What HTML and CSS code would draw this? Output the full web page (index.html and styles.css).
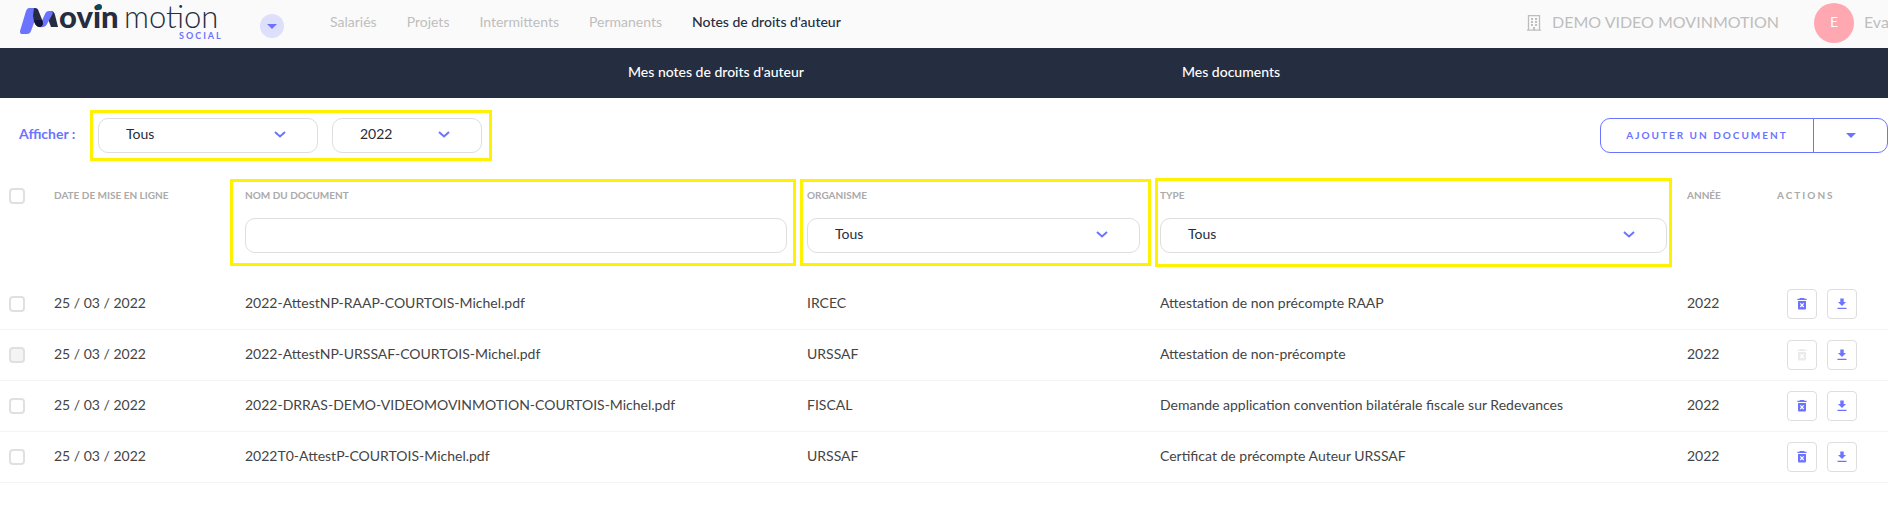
FILE: index.html
```html
<!DOCTYPE html>
<html lang="fr">
<head>
    <meta charset="UTF-8">
    <meta name="viewport" content="width=device-width, initial-scale=1.0">
    <title>Movinmotion Social - Notes de droits d'auteur</title>
    <link rel="stylesheet" href="styles.css">
</head>
<body>
    <!-- Shared icons -->
    <svg class="sprite" aria-hidden="true">
        <symbol id="chevron" viewBox="0 0 12 7">
            <path d="M1 0.9 L6 5.5 L11 0.9" fill="none" stroke="currentColor" stroke-width="2"/>
        </symbol>
        <symbol id="caret" viewBox="0 0 10 5">
            <path d="M0 0 H10 L5 5 Z" fill="currentColor"/>
        </symbol>
        <symbol id="trash" viewBox="0 0 10 12">
            <path d="M3 0 H7 L7.6 0.7 H9.6 V2 H0.4 V0.7 H2.4 Z" fill="currentColor"/>
            <path d="M1 3 H9 V10.6 Q9 11.6 8 11.6 H2 Q1 11.6 1 10.6 Z" fill="currentColor"/>
            <path d="M3.3 5.4 L6.7 9 M6.7 5.4 L3.3 9" fill="none" stroke="#fff" stroke-width="1.2"/>
        </symbol>
        <symbol id="download" viewBox="0 0 10 12">
            <path d="M3.3 0.5 H6.7 V4 H9 L5 8 L1 4 H3.3 Z M0.5 9.7 H9.5 V11.1 H0.5 Z" fill="currentColor"/>
        </symbol>
    </svg>

    <header class="topbar">
        <a class="logo" href="#" aria-label="Movinmotion Social">
            <svg width="204" height="44" viewBox="0 0 204 44">
                <path d="M12 8 H18 Q22 8 21 12 L14 31 Q13 34 10 34 H4 Q3 34 3 31 L9 11 Q10 8 12 8 Z" fill="#6c73ff"/>
                <path d="M34 11 Q37 11 38 15 L41 27 H34 L31 19 Z" fill="#252d40"/>
                <path d="M22 27 L28 14 Q29 11 32 11 H34 Q37 12 35 15 L30 24 Q28 28 22 27 Z" fill="#6c73ff"/>
                <path d="M17 8 Q21 8 22 12 L26 22 Q26 27 22 27 Q18 26 17 21 L16 16 Z" fill="#252d40"/>
                <path d="M17 20 L25 20 L26 24 Q25 27 22 27 Q18 26 17 20 Z" fill="#12123c"/>
                <text class="logo-bold" x="42" y="28">ovin</text>
                <text class="logo-light" x="107" y="28">motion</text>
                <circle cx="82" cy="7" r="3" fill="#0c4a63"/>
                <text class="logo-social" x="162" y="39">SOCIAL</text>
            </svg>
        </a>
        <button class="switcher" aria-label="Changer d'espace">
            <svg width="10" height="5"><use href="#caret"/></svg>
        </button>
        <nav class="main-nav">
            <a href="#">Salariés</a>
            <a href="#">Projets</a>
            <a href="#">Intermittents</a>
            <a href="#">Permanents</a>
            <a href="#" class="active">Notes de droits d'auteur</a>
        </nav>
        <div class="account">
            <svg width="14" height="16" viewBox="0 0 14 16">
                <path d="M1.5 15 V0.7 H12.5 V15 M0 15.2 H14" fill="none" stroke="#bebebe" stroke-width="1.3"/>
                <path d="M4 3 H6 V5 H4 Z M8 3 H10 V5 H8 Z M4 6 H6 V8 H4 Z M8 6 H10 V8 H8 Z M4 9 H6 V11 H4 Z M8 9 H10 V11 H8 Z M6 12 H8 V15 H6 Z" fill="#bebebe"/>
            </svg>
            <span class="company">DEMO VIDEO MOVINMOTION</span>
            <span class="avatar">E</span>
            <span class="user">Eva</span>
        </div>
    </header>

    <nav class="sub-nav">
        <a href="#">Mes notes de droits d'auteur</a>
        <a href="#">Mes documents</a>
    </nav>

    <main>
        <div class="toolbar">
            <label class="toolbar-label" for="show">Afficher :</label>
            <div class="filters">
                <div class="select wide">
                    <select id="show"><option>Tous</option></select>
                    <svg width="12" height="7"><use href="#chevron"/></svg>
                </div>
                <div class="select narrow">
                    <select aria-label="Année"><option>2022</option></select>
                    <svg width="12" height="7"><use href="#chevron"/></svg>
                </div>
            </div>
            <div class="add">
                <button class="add-main">AJOUTER UN DOCUMENT</button>
                <button class="add-more" aria-label="Plus d'options"><svg width="10" height="5"><use href="#caret"/></svg></button>
            </div>
        </div>

        <table class="documents">
            <colgroup>
                <col class="col-check">
                <col class="col-date">
                <col class="col-name">
                <col class="col-org">
                <col class="col-type">
                <col class="col-year">
                <col class="col-actions">
            </colgroup>
            <thead>
                <tr>
                    <th class="check"><input type="checkbox" aria-label="Tout sélectionner"></th>
                    <th>DATE DE MISE EN LIGNE</th>
                    <th class="marked marked-name">
                        <label for="name">NOM DU DOCUMENT</label>
                        <input type="text" id="name">
                    </th>
                    <th class="marked marked-org">
                        <label for="org">ORGANISME</label>
                        <div class="select">
                            <select id="org"><option>Tous</option></select>
                            <svg width="12" height="7"><use href="#chevron"/></svg>
                        </div>
                    </th>
                    <th class="marked marked-type">
                        <label for="type">TYPE</label>
                        <div class="select">
                            <select id="type"><option>Tous</option></select>
                            <svg width="12" height="7"><use href="#chevron"/></svg>
                        </div>
                    </th>
                    <th>ANNÉE</th>
                    <th class="actions-title">ACTIONS</th>
                </tr>
            </thead>
            <tbody>
                <tr>
                    <td class="check"><input type="checkbox" aria-label="Sélectionner"></td>
                    <td>25 / 03 / 2022</td>
                    <td>2022-AttestNP-RAAP-COURTOIS-Michel.pdf</td>
                    <td>IRCEC</td>
                    <td>Attestation de non précompte RAAP</td>
                    <td>2022</td>
                    <td class="actions-cell">
                        <div class="actions">
                            <button aria-label="Supprimer"><svg width="10" height="12"><use href="#trash"/></svg></button>
                            <button aria-label="Télécharger"><svg width="10" height="12"><use href="#download"/></svg></button>
                        </div>
                    </td>
                </tr>
                <tr>
                    <td class="check"><input type="checkbox" aria-label="Sélectionner" disabled></td>
                    <td>25 / 03 / 2022</td>
                    <td>2022-AttestNP-URSSAF-COURTOIS-Michel.pdf</td>
                    <td>URSSAF</td>
                    <td>Attestation de non-précompte</td>
                    <td>2022</td>
                    <td class="actions-cell">
                        <div class="actions">
                            <button aria-label="Supprimer" disabled><svg width="10" height="12"><use href="#trash"/></svg></button>
                            <button aria-label="Télécharger"><svg width="10" height="12"><use href="#download"/></svg></button>
                        </div>
                    </td>
                </tr>
                <tr>
                    <td class="check"><input type="checkbox" aria-label="Sélectionner"></td>
                    <td>25 / 03 / 2022</td>
                    <td>2022-DRRAS-DEMO-VIDEOMOVINMOTION-COURTOIS-Michel.pdf</td>
                    <td>FISCAL</td>
                    <td>Demande application convention bilatérale fiscale sur Redevances</td>
                    <td>2022</td>
                    <td class="actions-cell">
                        <div class="actions">
                            <button aria-label="Supprimer"><svg width="10" height="12"><use href="#trash"/></svg></button>
                            <button aria-label="Télécharger"><svg width="10" height="12"><use href="#download"/></svg></button>
                        </div>
                    </td>
                </tr>
                <tr>
                    <td class="check"><input type="checkbox" aria-label="Sélectionner"></td>
                    <td>25 / 03 / 2022</td>
                    <td>2022T0-AttestP-COURTOIS-Michel.pdf</td>
                    <td>URSSAF</td>
                    <td>Certificat de précompte Auteur URSSAF</td>
                    <td>2022</td>
                    <td class="actions-cell">
                        <div class="actions">
                            <button aria-label="Supprimer"><svg width="10" height="12"><use href="#trash"/></svg></button>
                            <button aria-label="Télécharger"><svg width="10" height="12"><use href="#download"/></svg></button>
                        </div>
                    </td>
                </tr>
            </tbody>
        </table>
    </main>
</body>
</html>
```
FILE: styles.css
```css
* {
    box-sizing: border-box;
}

body {
    margin: 0;
    background-color: #fff;
    color: #444;
    font-family: Lato, sans-serif;
    font-size: 14px;
    line-height: 20px;
}

a {
    color: inherit;
    text-decoration: none;
}

button,
input,
select {
    margin: 0;
    font: inherit;
    color: inherit;
}

button {
    display: flex;
    align-items: center;
    justify-content: center;
    padding: 0;
    background: none;
    cursor: pointer;
}

svg {
    display: block;
    flex-shrink: 0;
}

.sprite {
    display: none;
}

/* Top bar */

.topbar {
    display: flex;
    align-items: flex-start;
    height: 48px;
    padding-left: 17px;
    background-color: #fafafa;
}

.logo svg {
    overflow: visible;
}

.logo-bold,
.logo-light {
    font-size: 31px;
    fill: #252d40;
}

.logo-bold {
    font-weight: 900;
}

.logo-light {
    font-weight: 300;
}

.logo-social {
    font-size: 9px;
    font-weight: 700;
    letter-spacing: 2px;
    fill: #6c73ff;
}

.switcher {
    width: 24px;
    height: 24px;
    margin: 14px 46px 0 39px;
    border: none;
    border-radius: 50%;
    background-color: #dedffb;
    color: #6c73ff;
}

.main-nav {
    display: flex;
    gap: 30px;
    padding-top: 12px;
    color: #bebebe;
    white-space: nowrap;
}

.main-nav .active {
    color: #252d40;
    font-weight: 500;
}

.account {
    display: flex;
    align-items: center;
    margin-left: auto;
    padding-top: 3px;
    color: #bebebe;
    font-size: 16px;
    white-space: nowrap;
}

.company {
    margin: 0 35px 0 11px;
    padding-bottom: 2px;
}

.avatar {
    width: 40px;
    height: 40px;
    border-radius: 50%;
    background-color: #ffa8b2;
    color: #fff;
    font-size: 14px;
    line-height: 38px;
    text-align: center;
}

.user {
    width: 24px;
    margin-left: 10px;
    padding-bottom: 2px;
    overflow: hidden;
}

/* Sub navigation */

.sub-nav {
    display: flex;
    justify-content: center;
    padding: 14px 0 16px 59px;
    background-color: #252d40;
    color: #fff;
    font-weight: 500;
    text-align: center;
}

.sub-nav a {
    width: 515px;
}

/* Filters above the table */

.toolbar {
    display: flex;
    align-items: center;
    padding: 12px 0 0 19px;
}

.toolbar-label {
    width: 71px;
    padding-bottom: 3px;
    color: #6c73ff;
    font-weight: 700;
}

.filters {
    display: flex;
    gap: 14px;
    padding: 5px 7px 5px 5px;
    border: 3px solid #fff200;
}

.select {
    position: relative;
}

.select svg {
    position: absolute;
    top: 13px;
    right: 32px;
    color: #6c73ff;
    pointer-events: none;
}

.wide {
    width: 220px;
}

.narrow {
    width: 150px;
}

select,
input[type="text"] {
    display: block;
    width: 100%;
    height: 35px;
    padding: 0 27px 3px;
    border: 1px solid #dedede;
    border-radius: 10px;
    background-color: #fff;
    color: #252d40;
    appearance: none;
    font-size: 14px;
    font-weight: 400;
}

.add {
    display: flex;
    margin-left: auto;
    color: #6c73ff;
}

.add button {
    height: 35px;
    border: 1px solid #6c73ff;
}

.add .add-main {
    width: 214px;
    padding-bottom: 1px;
    border-radius: 10px 0 0 10px;
    font-size: 10px;
    font-weight: 700;
    letter-spacing: 2px;
}

.add .add-more {
    width: 75px;
    margin-left: -1px;
    border-radius: 0 10px 10px 0;
}

/* Documents table */

.documents {
    width: 100%;
    border-spacing: 0;
    table-layout: fixed;
}

.col-check {
    width: 54px;
}

.col-date {
    width: 191px;
}

.col-name {
    width: 562px;
}

.col-org {
    width: 353px;
}

.col-type {
    width: 527px;
}

.col-year {
    width: 90px;
}

.col-actions {
    width: 111px;
}

th {
    height: 118px;
    padding: 24px 20px 0 0;
    color: #aaa;
    font-size: 10px;
    font-weight: 700;
    text-align: left;
    vertical-align: top;
}

th label {
    display: block;
    margin-bottom: 13px;
}

/* Yellow frames around the column filters */

.marked {
    position: relative;
}

.marked::after {
    content: "";
    position: absolute;
    top: 18px;
    bottom: 13px;
    border: 3px solid #fff200;
    pointer-events: none;
}

.marked-name::after {
    left: -15px;
    right: 11px;
}

.marked-org::after {
    left: -7px;
    right: 9px;
}

.marked-type::after {
    top: 17px;
    bottom: 12px;
    left: -5px;
    right: 15px;
}

.actions-title {
    padding-right: 0;
    letter-spacing: 2px;
}

td {
    height: 51px;
    padding: 0 0 2px;
    border-bottom: 1px solid #f4f4f4;
}

.check {
    padding-left: 9px;
}

th.check {
    padding-top: 27px;
}

td.check,
td.actions-cell {
    padding-bottom: 0;
}

input[type="checkbox"] {
    display: block;
    width: 16px;
    height: 16px;
    border: 2px solid #e0e0e0;
    border-radius: 4px;
    background-color: #fff;
    appearance: none;
}

input[type="checkbox"]:disabled {
    background-color: #f4f4f4;
}

.actions {
    display: flex;
    gap: 10px;
    padding-left: 10px;
}

.actions button {
    width: 30px;
    height: 30px;
    border: 1px solid #dedede;
    border-radius: 4px;
    color: #6c73ff;
}

.actions button:disabled {
    color: #ebebeb;
    cursor: default;
}
```
